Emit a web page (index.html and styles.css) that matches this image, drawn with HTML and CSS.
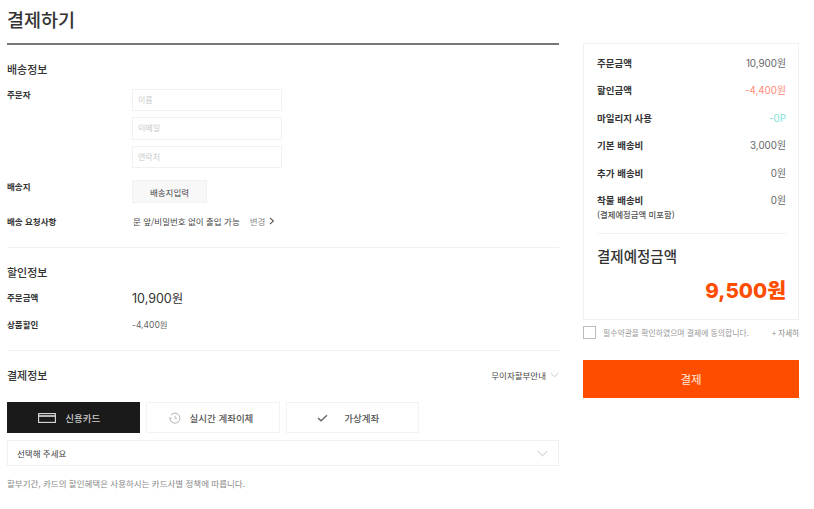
FILE: index.html
```html
<!DOCTYPE html>
<html lang="ko">
<head>
<meta charset="utf-8">
<title>결제하기</title>
<link rel="stylesheet" href="styles.css">
</head>
<body>
<div class="page">
  <main class="main">
    <h1 class="title">결제하기</h1>

    <section class="section shipping">
      <h2 class="section-title">배송정보</h2>
      <div class="row row-orderer">
        <div class="label">주문자</div>
        <div class="fields">
          <div class="field">이름</div>
          <div class="field">이메일</div>
          <div class="field">연락처</div>
        </div>
      </div>
      <div class="row row-address">
        <div class="label">배송지</div>
        <button class="addr-btn">배송지입력</button>
      </div>
      <div class="row row-request">
        <div class="label">배송 요청사항</div>
        <div class="request">
          <span class="request-text">문 앞/비밀번호 없이 출입 가능</span>
          <span class="change">변경</span>
          <svg class="chev-right" width="6" height="8" viewBox="0 0 6 8"><path d="M1 .8 4.4 4 1 7.2" fill="none" stroke="#555" stroke-width="1.1"/></svg>
        </div>
      </div>
    </section>

    <section class="section discount">
      <h2 class="section-title">할인정보</h2>
      <div class="row row-amount">
        <div class="label">주문금액</div>
        <div class="amount">10,900원</div>
      </div>
      <div class="row row-coupon">
        <div class="label">상품할인</div>
        <div class="coupon">-4,400원</div>
      </div>
    </section>

    <section class="section payment">
      <div class="pay-head">
        <h2 class="section-title">결제정보</h2>
        <div class="interest">무이자할부안내
          <svg width="9" height="6" viewBox="0 0 9 6"><path d="M.5 1 4.5 4.8 8.5 1" fill="none" stroke="#bbb" stroke-width=".8"/></svg>
        </div>
      </div>
      <div class="tabs">
        <div class="tab tab-active">
          <svg width="18" height="10" viewBox="0 0 18 10"><rect x=".6" y=".6" width="16.8" height="8.8" fill="none" stroke="#ddd" stroke-width="1.1"/><rect x="1" y="2.2" width="16" height="1.6" fill="#ddd"/></svg>
          <span>신용카드</span>
        </div>
        <div class="tab tab-live">
          <svg width="12" height="12" viewBox="0 0 12 12"><path d="M2 3.2A5 5 0 1 1 1 6" fill="none" stroke="#aaa" stroke-width=".9"/><path d="M6 3.8V6.4H8" fill="none" stroke="#aaa" stroke-width=".8"/><path d="M0 6H2.4" stroke="#aaa" stroke-width=".8"/></svg>
          <span>실시간 계좌이체</span>
        </div>
        <div class="tab tab-virtual">
          <svg width="11" height="8" viewBox="0 0 11 8"><path d="M1 4 4 6.8 10 1.2" fill="none" stroke="#666" stroke-width="1.4"/></svg>
          <span class="tab-gap">가상계좌</span>
        </div>
      </div>
      <div class="select">
        <span>선택해 주세요</span>
        <svg width="11" height="7" viewBox="0 0 11 7"><path d="M.6 1 5.5 5.8 10.4 1" fill="none" stroke="#bbb" stroke-width=".9"/></svg>
      </div>
      <p class="notice">할부기간, 카드의 할인혜택은 사용하시는 카드사별 정책에 따릅니다.</p>
    </section>
  </main>

  <aside class="side">
    <div class="summary">
      <div class="sum-row"><span class="sum-label">주문금액</span><span class="sum-val">10,900원</span></div>
      <div class="sum-row"><span class="sum-label">할인금액</span><span class="sum-val red">-4,400원</span></div>
      <div class="sum-row"><span class="sum-label">마일리지 사용</span><span class="sum-val teal">-0P</span></div>
      <div class="sum-row"><span class="sum-label">기본 배송비</span><span class="sum-val">3,000원</span></div>
      <div class="sum-row"><span class="sum-label">추가 배송비</span><span class="sum-val">0원</span></div>
      <div class="sum-row sum-last">
        <span class="sum-label">착불 배송비<small class="sum-note">(결제예정금액 미포함)</small></span>
        <span class="sum-val">0원</span>
      </div>
      <div class="total">
        <div class="total-label">결제예정금액</div>
        <div class="total-val">9,500원</div>
      </div>
    </div>
    <div class="agree">
      <span class="check"></span>
      <span class="agree-text">필수약관을 확인하였으며 결제에 동의합니다.</span>
      <span class="more">+ 자세히</span>
    </div>
    <button class="pay-btn">결제</button>
  </aside>
</div>
</body>
</html>
```

FILE: styles.css
```css
* { box-sizing: border-box; }
html, body { margin: 0; padding: 0; background: #fff; }
body {
  font-family: "Noto Sans CJK KR", "Noto Sans", sans-serif;
  color: #333;
  width: 814px;
  height: 509px;
  overflow: hidden;
}
h1, h2, p { margin: 0; font-weight: 400; }
button { font-family: inherit; border: 0; padding: 0; margin: 0; }

.page { display: flex; align-items: flex-start; padding-left: 7px; gap: 24px; }
.main { width: 552px; }
.side { width: 216px; padding-top: 43px; }

.title {
  height: 45px;
  border-bottom: 2px solid #777;
  font-size: 18.5px;
  font-weight: 500;
  line-height: 38px;
  color: #333;
}

.section-title { font-size: 11px; font-weight: 500; line-height: 16px; color: #333; }
.section { border-bottom: 1px solid #f1f1f1; }
.shipping { height: 203px; padding-top: 16px; }
.discount { height: 103px; padding-top: 16px; }
.payment { border-bottom: 0; padding-top: 16px; }

.row { display: flex; }
.label { width: 125px; font-size: 8.5px; font-weight: 700; line-height: 12px; color: #333; }

.row-orderer { margin-top: 12px; }
.row-orderer .label { margin-top: -1px; }
.fields { display: flex; flex-direction: column; gap: 6px; width: 150px; }
.field {
  height: 22.4px;
  border: 1px solid #f1f1f1;
  font-size: 8px;
  line-height: 20px;
  padding-left: 5px;
  color: #c9c9c9;
}

.row-address { margin-top: 12px; }
.addr-btn {
  width: 75px;
  height: 23px;
  background: #f8f8f9;
  border: 1px solid #f1f1f1;
  font-size: 8.5px;
  color: #444;
}
.row-request { margin-top: 12px; }
.request { display: flex; align-items: center; height: 12px; padding-left: 1px; font-size: 8.5px; color: #444; }
.change { margin-left: 10px; color: #888; }
.chev-right { margin-left: 4px; }

.row-amount { margin-top: 9px; align-items: center; height: 16px; }
.amount { font-family: "Inter", "Noto Sans CJK KR", sans-serif; font-size: 12.5px; color: #333; }
.row-coupon { margin-top: 11px; align-items: center; height: 16px; }
.coupon { font-family: "Inter", "Noto Sans CJK KR", sans-serif; font-size: 8.5px; color: #666; }

.pay-head { display: flex; justify-content: space-between; align-items: center; height: 16px; }
.interest { display: flex; align-items: center; gap: 4px; font-size: 8.5px; color: #444; }

.tabs { display: flex; gap: 6px; margin-top: 19px; }
.tab {
  width: 133.3px;
  height: 31px;
  border: 1px solid #f3f3f3;
  display: flex;
  align-items: center;
  justify-content: center;
  gap: 9px;
  padding-right: 9px;
  font-size: 9.5px;
  font-weight: 500;
  color: #555;
}
.tab-active { background: #1a1a1a; border-color: #1a1a1a; color: #ccc; }
.tab-live { padding-right: 4px; }
.tab-virtual { padding-right: 8px; }
.tab-gap { margin-left: 7px; }

.select {
  margin-top: 7px;
  height: 26px;
  border: 1px solid #f1f1f1;
  display: flex;
  align-items: center;
  justify-content: space-between;
  padding: 0 10px 0 9px;
  font-size: 8.5px;
  color: #444;
}
.notice { margin-top: 10px; font-size: 8.5px; line-height: 14px; color: #888; }

.summary {
  height: 277px;
  border: 1px solid #f1f1f1;
  padding: 6px 12px 0 13px;
}
.sum-row {
  display: flex;
  justify-content: space-between;
  align-items: flex-start;
  height: 27.4px;
  padding-top: 7px;
  line-height: 13px;
}
.sum-label { font-size: 9.5px; font-weight: 700; color: #333; }
.sum-val { font-family: "Inter", "Noto Sans CJK KR", sans-serif; font-size: 9.8px; color: #666; }
.red { color: #ff8a75; }
.teal { color: #7fdfdc; }
.sum-last { height: 46px; }
.sum-note { display: block; font-size: 8.4px; line-height: 15px; font-weight: 500; color: #555; }
.total { border-top: 1px solid #f3f3f3; padding-top: 12px; }
.total-label { font-size: 14.5px; font-weight: 500; line-height: 21px; margin-top: -1px; color: #333; }
.total-val {
  margin-top: 12px;
  text-align: right;
  font-family: "Inter", "Noto Sans CJK KR", sans-serif;
  font-size: 20.5px;
  font-weight: 800;
  line-height: 26px;
  color: #ff4d00;
}

.agree { display: flex; align-items: center; margin-top: 6px; height: 13px; }
.check { width: 13px; height: 13px; border: 1px solid #bbb; background: #fff; }
.agree-text { margin-left: 7px; font-size: 7.85px; color: #999; }
.more { margin-left: auto; font-size: 7.5px; color: #888; }

.pay-btn {
  display: block;
  width: 216px;
  height: 38px;
  margin-top: 21px;
  background: #ff4d00;
  color: #ffe9df;
  font-size: 11.5px;
}
```
